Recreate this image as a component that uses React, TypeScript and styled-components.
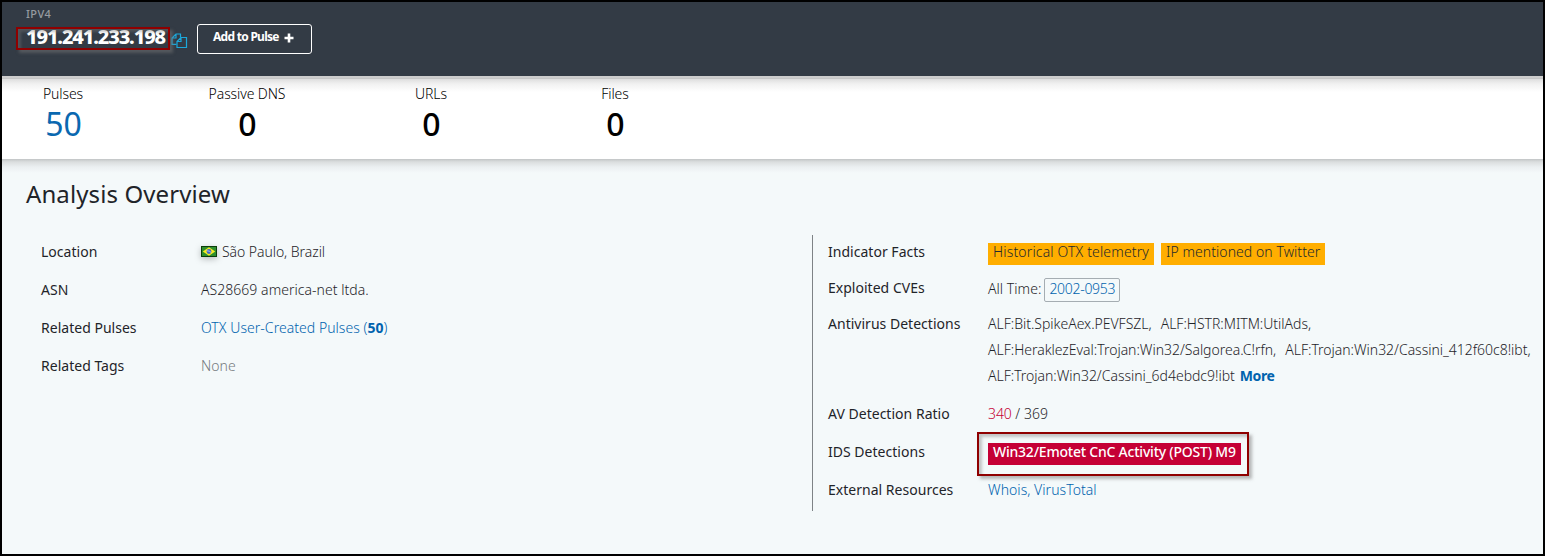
import React from 'react';
import styled, { createGlobalStyle, css } from 'styled-components';

const Global = createGlobalStyle`
  *, *::before, *::after { box-sizing: border-box; }
  body { margin: 0; background: #000; }
`;

const Frame = styled.div`
  width: 1545px;
  height: 556px;
  padding: 2px;
  background: #000;
  font: 300 14px/26px 'Noto Sans', sans-serif;
  color: #1f2429;
  overflow: hidden;
`;

const Page = styled.div`
  display: flex;
  flex-direction: column;
  height: 552px;
  background: #f4f9fa;
  overflow: hidden;
`;

const Header = styled.header`
  flex: none;
  height: 74px;
  padding: 5px 24px 0;
  background: #333b45;
  color: #fff;
`;

const Kind = styled.div`
  height: 14px;
  font-size: 11px;
  font-weight: 500;
  line-height: 14px;
  letter-spacing: 0.4px;
  color: #979ba1;
`;

const TitleRow = styled.div`
  display: flex;
  height: 33px;
`;

const Highlight = styled.span<{ $inset: string }>`
  position: absolute;
  inset: ${(p) => p.$inset};
  border: 2px solid #8f0000;
  box-shadow: 3px 3px 3px rgba(120, 120, 120, 0.5),
    inset 3px 3px 3px rgba(120, 120, 120, 0.4);
  pointer-events: none;
`;

const Address = styled.h1`
  position: relative;
  width: 145px;
  height: 28px;
  margin: 3px 0 0;
  font-size: 20px;
  font-weight: 800;
  line-height: 25px;
  letter-spacing: -1.12px;
  white-space: nowrap;
`;

const CopyIcon = styled.svg`
  width: 17px;
  height: 16px;
  margin-top: 12px;
`;

const PulseButton = styled.button`
  display: flex;
  align-items: flex-start;
  width: 115px;
  height: 30px;
  margin: 3px 0 0 9px;
  padding: 3px 0 0 15px;
  border: 1px solid #fff;
  border-radius: 3px;
  background: transparent;
  color: #fff;
  font: 700 12px/18px 'Noto Sans', sans-serif;
  letter-spacing: -0.72px;
  white-space: nowrap;
`;

const PlusIcon = styled.svg`
  width: 10px;
  height: 10px;
  margin: 5px 0 0 5px;
`;

const Stats = styled.section`
  flex: none;
  display: flex;
  gap: 60px;
  height: 83px;
  padding-top: 7px;
  background: linear-gradient(#cdcdcd 0 2px, #c6c6c6 2px 3px, #dedede 3px, #f1f1f1 8px, #fff 16px);
  color: #000;
`;

const Stat = styled.div`
  width: 124px;
  text-align: center;
`;

const StatLabel = styled.div`
  height: 22px;
  margin-right: 2px;
  line-height: 22px;
  letter-spacing: -0.1px;
`;

const StatValue = styled.div<{ $linked?: boolean }>`
  height: 38px;
  margin-right: 1px;
  font-size: 32px;
  font-weight: ${(p) => (p.$linked ? 400 : 500)};
  line-height: 38px;
  color: ${(p) => (p.$linked ? '#0a68b0' : '#000')};
`;

const Overview = styled.main`
  flex: 1;
  padding: 17px 0 0 24px;
  background: linear-gradient(#c2c5c6 0, #dbdedf 3px, #ebeff1 8px, #f4f9fa 14px);
`;

const Heading = styled.h2`
  height: 36px;
  margin: 0 0 21px;
  font-size: 24px;
  font-weight: 400;
  line-height: 36px;
  letter-spacing: 0.1px;
`;

const Columns = styled.div`
  display: flex;
`;

const Column = styled.dl<{ $divided?: boolean }>`
  display: flex;
  flex-direction: column;
  gap: 12px;
  width: 786px;
  margin: 0;
  padding: 6px 0 0 15px;
  ${(p) =>
    p.$divided &&
    css`
      width: 731px;
      height: 276px;
      margin-top: 2px;
      padding-top: 4px;
      border-left: 1px solid #7e8386;
    `}
`;

const Row = styled.div<{ $tight?: boolean }>`
  display: flex;
  margin-bottom: ${(p) => (p.$tight ? '-2px' : '0')};
`;

const Term = styled.dt`
  flex: none;
  width: 160px;
  font-weight: 400;
  letter-spacing: 0.02px;
  white-space: nowrap;
`;

const Detail = styled.dd<{ $gap?: number }>`
  display: flex;
  flex-wrap: wrap;
  gap: 0 ${(p) => p.$gap ?? 0}px;
  margin: 0;
  letter-spacing: 0.04px;
  white-space: pre;
`;

const Muted = styled.span`
  color: #74797d;
`;

const Link = styled.a<{ $strong?: boolean; $spacing?: number }>`
  color: #0063ae;
  font-weight: ${(p) => (p.$strong ? 700 : 300)};
  letter-spacing: ${(p) => p.$spacing ?? 0.04}px;
`;

const Count = styled.b`
  font-weight: 700;
`;

const Flag = styled.svg`
  width: 16px;
  height: 11px;
  margin: 7px 5px 0 0;
  filter: drop-shadow(0 2px 3px rgba(0, 0, 0, 0.25));
`;

const Place = styled.span`
  letter-spacing: -0.06px;
`;

const Tag = styled.span<{ $width: number; $spacing: number; $alert?: boolean }>`
  position: relative;
  width: ${(p) => p.$width}px;
  height: 22px;
  margin-top: 4px;
  padding-left: 5px;
  line-height: 18px;
  letter-spacing: ${(p) => p.$spacing}px;
  background: ${(p) => (p.$alert ? '#c50035' : '#ffae00')};
  color: ${(p) => (p.$alert ? '#fff' : '#24292e')};
  font-weight: ${(p) => (p.$alert ? 500 : 300)};
`;

const Period = styled.span`
  height: 26px;
  padding-top: 1px;
`;

const CveBox = styled.span`
  width: 76px;
  height: 24px;
  margin: 3px 0 -1px;
  padding-left: 4px;
  border: 1px solid #a5adb2;
  border-radius: 2px;
  line-height: 19px;
`;

const Detections = styled.ul`
  margin: 0;
  padding: 0;
  list-style: none;
`;

const DetectionLine = styled.li<{ $gap?: number }>`
  display: flex;
  gap: ${(p) => p.$gap ?? 9}px;
  height: 26px;
  letter-spacing: -0.02px;
`;

const Danger = styled.span`
  color: #c50035;
  letter-spacing: -0.1px;
`;

const stats = [
  { label: 'Pulses', value: 50, linked: true },
  { label: 'Passive DNS', value: 0 },
  { label: 'URLs', value: 0 },
  { label: 'Files', value: 0 },
];

function BrazilFlag() {
  return (
    <Flag viewBox="0 0 16 11">
      <rect width="16" height="11" fill="#0b3d0b" />
      <rect x="1" y="1" width="14" height="9" fill="#2f8f2c" />
      <path d="M8 1.2 14.2 5.5 8 9.8 1.8 5.5Z" fill="#f6ea22" />
      <circle cx="8" cy="5.5" r="2.4" fill="#3f66c4" />
      <path d="M5.8 4.8Q8.4 4.5 10.2 6.5" fill="none" stroke="#c9d6f2" strokeWidth="0.8" />
    </Flag>
  );
}

export default function App() {
  return (
    <Frame>
      <Global />
      <Page>
        <Header>
          <Kind>IPV4</Kind>
          <TitleRow>
            <Address>
              <Highlight $inset="3px 1px 2px -10px" />
              191.241.233.198
            </Address>
            <CopyIcon viewBox="0 0 17 16" fill="none" stroke="#1ba8dc" strokeWidth="1.2">
              <path d="M5.5 11.3H1V5L5 1h4.5v3.5M5 1v4H1" />
              <path d="M6 8.5 10 4.5h5.5v10H6ZM10 4.5v4H6" />
            </CopyIcon>
            <PulseButton>
              Add to Pulse
              <PlusIcon viewBox="0 0 10 10">
                <path d="M5 0.5v9M0.5 5h9" stroke="#fff" strokeWidth="2.6" />
              </PlusIcon>
            </PulseButton>
          </TitleRow>
        </Header>

        <Stats>
          {stats.map((s) => (
            <Stat key={s.label}>
              <StatLabel>{s.label}</StatLabel>
              <StatValue $linked={s.linked}>{s.value}</StatValue>
            </Stat>
          ))}
        </Stats>

        <Overview>
          <Heading>Analysis Overview</Heading>
          <Columns>
            <Column>
              <Row>
                <Term>Location</Term>
                <Detail>
                  <BrazilFlag />
                  <Place>São Paulo, Brazil</Place>
                </Detail>
              </Row>
              <Row>
                <Term>ASN</Term>
                <Detail>AS28669 america-net ltda.</Detail>
              </Row>
              <Row>
                <Term>Related Pulses</Term>
                <Detail>
                  <Link>
                    OTX User-Created Pulses (<Count>50</Count>)
                  </Link>
                </Detail>
              </Row>
              <Row>
                <Term>Related Tags</Term>
                <Detail>
                  <Muted>None</Muted>
                </Detail>
              </Row>
            </Column>

            <Column $divided>
              <Row $tight>
                <Term>Indicator Facts</Term>
                <Detail $gap={7}>
                  <Tag $width={166} $spacing={0.15}>Historical OTX telemetry</Tag>
                  <Tag $width={164} $spacing={0.06}>IP mentioned on Twitter</Tag>
                </Detail>
              </Row>
              <Row $tight>
                <Term>Exploited CVEs</Term>
                <Detail $gap={3}>
                  <Period>All Time:</Period>
                  <CveBox>
                    <Link $spacing={-0.3}>2002-0953</Link>
                  </CveBox>
                </Detail>
              </Row>
              <Row>
                <Term>Antivirus Detections</Term>
                <Detail>
                  <Detections>
                    <DetectionLine>
                      <span>ALF:Bit.SpikeAex.PEVFSZL,</span>
                      <span>ALF:HSTR:MITM:UtilAds,</span>
                    </DetectionLine>
                    <DetectionLine>
                      <span>ALF:HeraklezEval:Trojan:Win32/Salgorea.C!rfn,</span>
                      <span>ALF:Trojan:Win32/Cassini_412f60c8!ibt,</span>
                    </DetectionLine>
                    <DetectionLine $gap={5}>
                      <span>ALF:Trojan:Win32/Cassini_6d4ebdc9!ibt</span>
                      <Link $strong $spacing={-0.4}>More</Link>
                    </DetectionLine>
                  </Detections>
                </Detail>
              </Row>
              <Row>
                <Term>AV Detection Ratio</Term>
                <Detail>
                  <Danger>340</Danger> / 369
                </Detail>
              </Row>
              <Row>
                <Term>IDS Detections</Term>
                <Detail>
                  <Tag $width={253} $spacing={-0.22} $alert>
                    Win32/Emotet CnC Activity (POST) M9
                    <Highlight $inset="-11px -8px -11px -11px" />
                  </Tag>
                </Detail>
              </Row>
              <Row>
                <Term>External Resources</Term>
                <Detail>
                  <Link>Whois, VirusTotal</Link>
                </Detail>
              </Row>
            </Column>
          </Columns>
        </Overview>
      </Page>
    </Frame>
  );
}
